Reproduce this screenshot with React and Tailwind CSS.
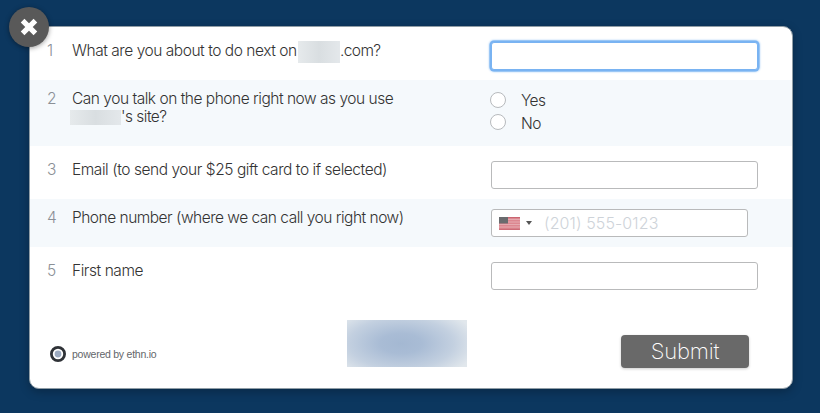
import React from 'react';
import clsx from 'clsx';

function Row({ number, label, className, children }) {
  return (
    <div className={clsx('flex items-start pl-[17px]', className)}>
      <span className="w-[25px] text-[15.5px] leading-[18px] text-[#8b9096]">{number}</span>
      <div className="w-[419px] text-[15.5px] leading-[18px] text-[#333]">{label}</div>
      {children}
    </div>
  );
}

// Smudged out site name
function Redacted({ className }) {
  return <span className={clsx('inline-block bg-linear-to-r from-[#e6eaec] via-[#d9dee1] to-[#e4e8eb]', className)} />;
}

function TextInput({ className }) {
  return <input type="text" className={clsx('h-7 w-[267px] rounded-[3px] border bg-white outline-none', className)} />;
}

function RadioOption({ label }) {
  return (
    <label className="flex h-[22.5px] items-center text-[15.5px] leading-[18px] text-[#333]">
      <input type="radio" name="talk" className="-mt-[3px] mr-[15px] size-4 appearance-none rounded-full border border-[#b7babd] bg-white" />
      <span className="tracking-[-0.6px]">{label}</span>
    </label>
  );
}

function UsFlag() {
  return (
    <svg width="21" height="13" viewBox="0 0 21 13">
      <rect width="21" height="13" rx="1" fill="#dc8790" />
      <path d="M0 2.5h21M0 5h21M0 7.5h21M0 10h21" stroke="#e7b4b9" strokeWidth="0.8" />
      <path d="M0 .5h21M0 12.3h21" stroke="#c96571" strokeWidth="1" />
      <rect width="9" height="6.5" fill="#696b6e" />
    </svg>
  );
}

export default function App() {
  return (
    <div className="h-[413px] w-[820px] overflow-hidden bg-[#0c375f] pt-[26px] pl-[29px] font-['Inter','Liberation_Sans',sans-serif] font-light">
      <div className="relative h-[363px] w-[764px] rounded-[10px] border border-[#909da6] bg-white shadow-[0_3px_10px_rgba(0,0,0,0.25)]">
        <button className="absolute -top-5 -left-[21px] flex size-10 items-center justify-center rounded-full bg-[#595959] shadow-[0_1px_5px_rgba(0,0,0,0.4)]">
          <svg width="20" height="20" viewBox="0 0 20 20">
            <path d="M3.6 3.6L16.4 16.4M16.4 3.6L3.6 16.4" stroke="#fff" strokeWidth="5.2" />
          </svg>
        </button>

        <Row
          number="1"
          className="h-[53px] pt-[15px]"
          label={
            <div className="flex">
              <span className="w-[226px] whitespace-nowrap tracking-[-0.46px]">What are you about to do next on</span>
              <Redacted className="-mt-px -mb-1 h-[22px] w-[42px]" />
              <span className="tracking-[-0.6px]">.com?</span>
            </div>
          }
        >
          <TextInput className="border-[#79b3f2] shadow-[0_0_0_1.5px_#79b3f2,0_0_2px_2px_#a9cff7]" />
        </Row>

        <Row
          number="2"
          className="h-[66px] bg-[#f5f9fc] pt-2.5"
          label={
            <>
              <div className="tracking-[-0.48px]">Can you talk on the phone right now as you use</div>
              <div className="-ml-0.5 flex">
                <Redacted className="mt-0.5 h-[15px] w-[51px]" />
                <span className="tracking-[-0.52px]">'s site?</span>
              </div>
            </>
          }
        >
          <div className="-ml-px">
            <RadioOption label="Yes" />
            <RadioOption label="No" />
          </div>
        </Row>

        <Row number="3" className="h-[53px] pt-[15px]" label={<span className="tracking-[-0.44px]">Email (to send your $25 gift card to if selected)</span>}>
          <TextInput className="border-[#b9babb]" />
        </Row>

        <Row number="4" className="h-12 bg-[#f5f9fc] pt-2.5" label={<span className="tracking-[-0.5px]">Phone number (where we can call you right now)</span>}>
          <div className="flex h-7 w-[257px] items-center rounded-[3px] border border-[#b9babb] bg-white pl-[7px]">
            <UsFlag />
            <svg className="ml-1.5" width="6" height="4" viewBox="0 0 6 4">
              <path d="M0 0h6L3 4z" fill="#555" />
            </svg>
            <input type="tel" placeholder="(201) 555-0123" className="ml-3 w-[180px] text-base tracking-[0.1px] outline-none placeholder:text-[#ced3d9]" />
          </div>
        </Row>

        <Row number="5" className="h-[73px] pt-[15px]" label={<span className="tracking-[-0.44px]">First name</span>}>
          <TextInput className="border-[#b9babb]" />
        </Row>

        <div className="flex items-start pl-5">
          <div className="mt-[25px] flex w-[297px] items-center gap-1.5">
            <svg width="16" height="16" viewBox="0 0 16 16">
              <circle cx="8" cy="8" r="6.6" fill="#fff" stroke="#2f3237" strokeWidth="2.8" />
              <circle cx="8" cy="8" r="3.4" fill="#9caac0" />
            </svg>
            <span className="pt-0.5 font-['Liberation_Sans',sans-serif] text-[10.5px] font-normal tracking-[-0.24px] text-[#63666a]">powered by ethn.io</span>
          </div>
          <div className="h-[47px] w-[120px] bg-[radial-gradient(ellipse_70px_34px_at_45%_50%,#a4b8d2_0%,#a9bcd5_30%,#c3d0e0_75%,#e1e7ec_110%)]" />
          <button className="mt-[15px] ml-[154px] h-[33px] w-32 rounded-[4px] bg-[#696969] text-[22px] leading-[33px] font-extralight tracking-[-0.2px] text-white shadow-[0_1px_3px_rgba(0,0,0,0.2)]">
            Submit
          </button>
        </div>
      </div>
    </div>
  );
}
